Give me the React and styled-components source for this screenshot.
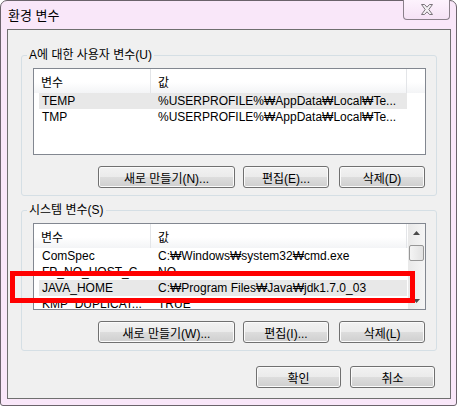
import React from 'react';
import styled, { createGlobalStyle } from 'styled-components';

const GlobalStyle = createGlobalStyle`
  html, body {
    margin: 0;
    padding: 0;
    background: #fff;
  }
  body {
    font-family: "Liberation Sans", "Noto Sans CJK KR", sans-serif;
    font-size: 12px;
    color: #000;
  }
`;

const userVars = [
  { name: 'TEMP', value: '%USERPROFILE%₩AppData₩Local₩Te...', selected: true },
  { name: 'TMP', value: '%USERPROFILE%₩AppData₩Local₩Te...' },
];

const systemVars = [
  { name: 'ComSpec', value: 'C:₩Windows₩system32₩cmd.exe' },
  { name: 'FP_NO_HOST_C...', value: 'NO' },
  { name: 'JAVA_HOME', value: 'C:₩Program Files₩Java₩jdk1.7.0_03', selected: true },
  { name: 'KMP_DUPLICAT...', value: 'TRUE' },
];

const CloseGlyph = () => (
  <svg width="14" height="11" viewBox="0 0 14 11">
    <polygon
      points="1.5,0.5 4.5,0.5 7,3.2 9.5,0.5 12.5,0.5 8.8,5.5 12.5,10.5 9.5,10.5 7,7.8 4.5,10.5 1.5,10.5 5.2,5.5"
      fill="#f4f1f4"
      stroke="#7a737a"
      strokeWidth="1"
      strokeLinejoin="round"
    />
  </svg>
);

const Arrow = ({ up }) => (
  <svg width="7" height="4" viewBox="0 0 7 4">
    <polygon points={up ? '3.5,0 7,4 0,4' : '0,0 7,0 3.5,4'} fill="#4a4a4a" />
  </svg>
);

function ListView({ rows, scroll }) {
  return (
    <ListFrame>
      <ListBody>
        <HeaderRow>
          <HeaderCell $w={117}>변수</HeaderCell>
          <HeaderCell $w={256}>값</HeaderCell>
        </HeaderRow>
        {rows.map(row => (
          <Row key={row.name} $selected={row.selected}>
            <NameCell>{row.name}</NameCell>
            <ValueCell>{row.value}</ValueCell>
          </Row>
        ))}
      </ListBody>
      {scroll && (
        <ScrollBar>
          <ScrollButton>
            <Arrow up />
          </ScrollButton>
          <Thumb />
          <ScrollTrack />
          <ScrollButton>
            <Arrow />
          </ScrollButton>
        </ScrollBar>
      )}
    </ListFrame>
  );
}

export default function App() {
  return (
    <>
      <GlobalStyle />
      <Window>
        <TitleBar>
          <Title>환경 변수</Title>
          <CloseButton>
            <CloseGlyph />
          </CloseButton>
        </TitleBar>
        <Client>
          <GroupBox>
            <Legend>A에 대한 사용자 변수(U)</Legend>
            <ListView rows={userVars} />
            <ButtonRow>
              <Button $w={137}>새로 만들기(N)...</Button>
              <Button $w={86}>편집(E)...</Button>
              <Button $w={86} $gap={10}>삭제(D)</Button>
            </ButtonRow>
          </GroupBox>
          <GroupBox $top={7}>
            <Legend>시스템 변수(S)</Legend>
            <ListView rows={systemVars} scroll />
            <ButtonRow>
              <Button $w={137}>새로 만들기(W)...</Button>
              <Button $w={86}>편집(I)...</Button>
              <Button $w={86} $gap={10}>삭제(L)</Button>
            </ButtonRow>
          </GroupBox>
          <DialogButtons>
            <Button $w={85}>확인</Button>
            <Button $w={85} $gap={9}>취소</Button>
          </DialogButtons>
        </Client>
        <Annotation />
      </Window>
    </>
  );
}

const Window = styled.div`
  position: relative;
  width: 457px;
  height: 406px;
  box-sizing: border-box;
  display: flex;
  flex-direction: column;
  border: 1px solid #6b636b;
  border-radius: 7px 7px 3px 3px;
  background: #f9e7f9;
`;

const TitleBar = styled.div`
  height: 28px;
  display: flex;
  align-items: flex-start;
  justify-content: space-between;
`;

const Title = styled.div`
  padding: 7px 0 0 7px;
  font-size: 13px;
  line-height: 16px;
  color: #000;
`;

const CloseButton = styled.div`
  width: 47px;
  height: 20px;
  margin: -1px 6px 0 0;
  box-sizing: border-box;
  display: flex;
  align-items: center;
  justify-content: center;
  border: 1px solid #8a808a;
  border-top: none;
  border-radius: 0 0 4px 4px;
  background: linear-gradient(#fdf3fd, #f5e2f5);
`;

const Client = styled.div`
  flex: 1;
  margin: 0 5px 6px 6px;
  border: 1px solid #6f6f6f;
  background: #f0f0f0;
  display: flex;
  flex-direction: column;
`;

const GroupBox = styled.fieldset`
  margin: ${p => p.$top ?? 18}px 13px 0 13px;
  padding: 5px 0 7px 0;
  border: 1px solid #d5dfe5;
  border-radius: 3px;
  min-width: 0;
`;

const Legend = styled.legend`
  margin-left: 5px;
  padding: 0 2px;
  font-size: 12px;
  line-height: 15px;
  color: #000;
`;

const ListFrame = styled.div`
  display: flex;
  height: 87px;
  margin: 0 10px 0 11px;
  box-sizing: border-box;
  border: 1px solid #828790;
  background: #fff;
  overflow: hidden;
`;

const ListBody = styled.div`
  flex: 1;
  min-width: 0;
`;

const HeaderRow = styled.div`
  display: flex;
  height: 24px;
  background: linear-gradient(#ffffff 0%, #ffffff 55%, #f3f4f6 100%);
`;

const HeaderCell = styled.div`
  width: ${p => p.$w}px;
  box-sizing: border-box;
  padding-left: 7px;
  display: flex;
  align-items: center;
  border-right: 1px solid #e3e5e8;
  font-size: 12px;
`;

const Row = styled.div`
  display: flex;
  height: 16px;
  width: 368px;
  margin-left: 5px;
  line-height: 16px;
  background: ${p => (p.$selected ? '#e8e8e8' : 'transparent')};
`;

const NameCell = styled.div`
  width: 112px;
  padding-left: 3px;
  box-sizing: border-box;
  white-space: nowrap;
  overflow: hidden;
`;

const ValueCell = styled.div`
  flex: 1;
  padding-left: 7px;
  white-space: nowrap;
  overflow: hidden;
`;

const ScrollBar = styled.div`
  width: 17px;
  flex-shrink: 0;
  display: flex;
  flex-direction: column;
  align-items: center;
  background: linear-gradient(to right, #e9e9e9, #f5f5f5);
`;

const ScrollButton = styled.div`
  height: 17px;
  width: 100%;
  flex-shrink: 0;
  display: flex;
  align-items: center;
  justify-content: center;
`;

const Thumb = styled.div`
  width: 15px;
  height: 16px;
  margin-top: 4px;
  box-sizing: border-box;
  border: 1px solid #979797;
  border-radius: 2px;
  background: linear-gradient(to right, #f4f4f4, #e2e2e2);
`;

const ScrollTrack = styled.div`
  flex: 1;
`;

const ButtonRow = styled.div`
  display: flex;
  justify-content: flex-end;
  margin-top: 11px;
  padding-right: 11px;
`;

const Button = styled.div`
  width: ${p => p.$w}px;
  height: 22px;
  margin-left: ${p => p.$gap ?? 8}px;
  box-sizing: border-box;
  display: flex;
  align-items: center;
  justify-content: center;
  border: 1px solid #707070;
  border-radius: 3px;
  background: linear-gradient(#f2f2f2 0%, #ebebeb 50%, #dddddd 51%, #cfcfcf 100%);
  box-shadow: inset 0 0 0 1px #fbfbfb;
  font-size: 12px;
  color: #000;
  &:first-child {
    margin-left: 0;
  }
`;

const DialogButtons = styled.div`
  display: flex;
  justify-content: flex-end;
  margin-top: 15px;
  padding-right: 15px;
`;

const Annotation = styled.div`
  position: absolute;
  left: 9px;
  top: 270px;
  width: 405px;
  height: 32px;
  box-sizing: border-box;
  border: 5px solid #ff0000;
  pointer-events: none;
`;
